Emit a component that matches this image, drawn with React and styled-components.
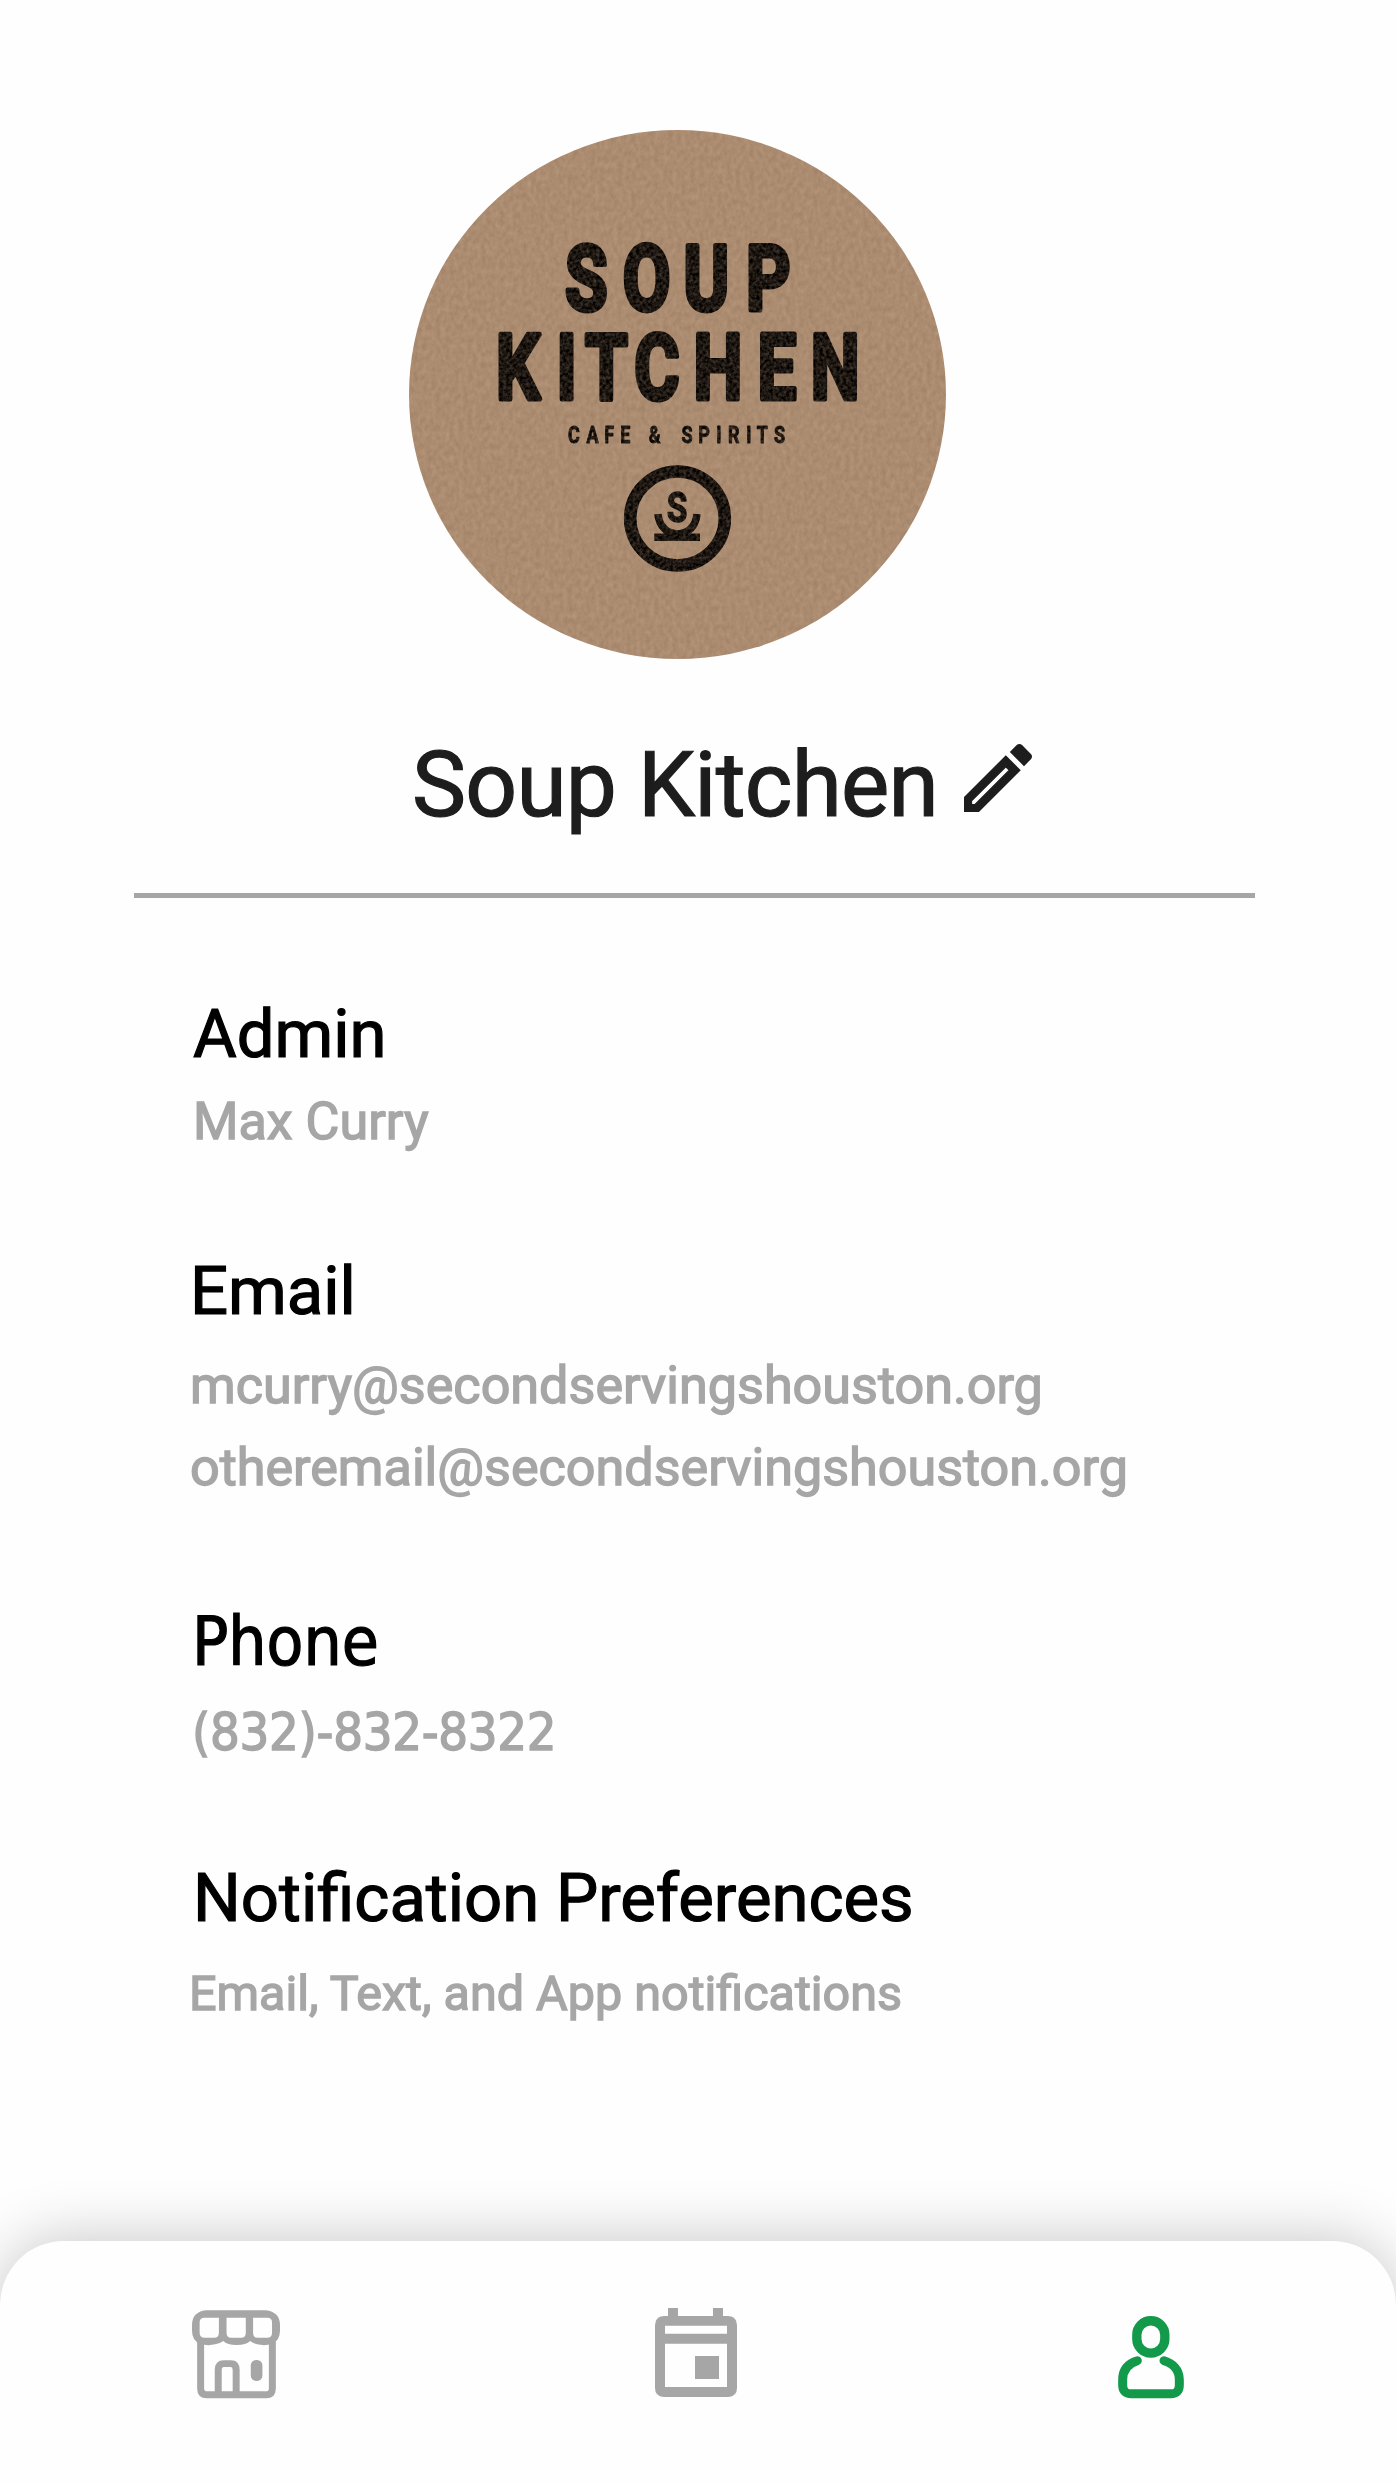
import React, { useState } from "react";
import styled, { createGlobalStyle } from "styled-components";

const GlobalStyle = createGlobalStyle`
	* {
		box-sizing: border-box;
	}
	body {
		margin: 0;
		background-color: #fefefe;
		font-family: Roboto, "Liberation Sans", sans-serif;
	}
`;

const Page = styled.div`
	display: flex;
	flex-direction: column;
	width: 1396px;
	height: 2483px;
	padding-top: 130px;
	overflow: hidden;
	background-color: #fefefe;
`;

const LogoImage = styled.svg`
	display: block;
	flex: none;
	width: 537px;
	height: 529px;
	margin-left: 409px;
`;

const TitleRow = styled.div`
	display: flex;
	align-items: flex-start;
	margin: 73px 0 0 412px;
`;

const Title = styled.h1`
	width: 552px;
	margin: 0;
	color: #1d1d1d;
	font-size: 91px;
	font-weight: 400;
	line-height: 106px;
	letter-spacing: -0.75px;
	white-space: nowrap;
	-webkit-text-stroke: 1.2px #1d1d1d;
`;

const EditButton = styled.button`
	display: flex;
	margin: 12px 0 0;
	padding: 0;
	border: none;
	background: none;
	color: #1d1d1d;
	cursor: pointer;
`;

const Divider = styled.hr`
	flex: none;
	width: 1121px;
	height: 5px;
	margin: 55px 0 0 134px;
	border: none;
	background-color: #a6a6a6;
`;

const Section = styled.section`
	display: flex;
	flex-direction: column;
	margin-top: ${(props) => props.$top}px;
	padding-left: ${(props) => props.$left}px;
	font-family: ${(props) => (props.$alt ? '"DejaVu Sans Condensed", "DejaVu Sans", sans-serif' : "inherit")};
	font-stretch: ${(props) => (props.$alt ? "condensed" : "normal")};
`;

const Heading = styled.h2`
	margin: 0;
	color: #000;
	font-size: 67px;
	font-weight: 400;
	line-height: 80px;
	white-space: nowrap;
	-webkit-text-stroke: 1.2px #000;
`;

const Values = styled.div`
	display: flex;
	flex-direction: column;
	gap: 20px;
	margin-top: ${(props) => props.$gap}px;
	margin-left: ${(props) => props.$shift || 0}px;
`;

const Value = styled.p`
	margin: 0;
	color: #a6a6a6;
	font-size: ${(props) => props.$size || 52.1}px;
	line-height: 62px;
	letter-spacing: ${(props) => props.$spacing || 0}px;
	white-space: nowrap;
	-webkit-text-stroke: 1.4px #a6a6a6;
`;

const NavBar = styled.nav`
	display: flex;
	flex: none;
	align-items: flex-start;
	height: 242px;
	margin-top: auto;
	padding: 67px 0 0 192px;
	border-radius: 64px 64px 0 0;
	background-color: #fefefe;
	box-shadow: 0 -2px 60px rgba(0, 0, 0, 0.22);
`;

const NavButton = styled.button`
	display: flex;
	margin: ${(props) => props.$top}px ${(props) => props.$right || 0}px 0 0;
	padding: 0;
	border: none;
	background: none;
	color: ${(props) => (props.$active ? "#129a4a" : "#a6a6a6")};
	cursor: pointer;
`;

const Logo = () => (
	<LogoImage viewBox="409 130 537 529" role="img" aria-label="Soup Kitchen logo">
		<defs>
			{/* paper grain */}
			<filter id="paper" x="0" y="0" width="100%" height="100%" colorInterpolationFilters="sRGB">
				<feTurbulence type="fractalNoise" baseFrequency="0.22 0.16" numOctaves="3" seed="4" />
				<feColorMatrix values="0.1 0 0 0 0.62  0.1 0 0 0 0.498  0.1 0 0 0 0.388  0 0 0 0 1" />
				<feComposite in2="SourceGraphic" operator="in" />
			</filter>
			{/* worn ink */}
			<filter id="ink" x="-5%" y="-5%" width="110%" height="110%" colorInterpolationFilters="sRGB">
				<feTurbulence type="fractalNoise" baseFrequency="0.3" numOctaves="3" seed="9" />
				<feColorMatrix values="0.45 0 0 0 -0.11  0.38 0 0 0 -0.1  0.32 0 0 0 -0.09  0 0 0 0 1" />
				<feComposite in2="SourceGraphic" operator="in" />
			</filter>
		</defs>
		<ellipse cx="677.5" cy="394.5" rx="268.5" ry="264.5" fill="#ab8b70" filter="url(#paper)" />
		<g
			fill="#17120f"
			stroke="#17120f"
			strokeLinejoin="round"
			fontFamily="Roboto, sans-serif"
			fontWeight="700"
			filter="url(#ink)"
		>
			<g fontSize="91" strokeWidth="5">
				<text transform="translate(565 310) scale(0.76 1)" x="0 76 156 238">
					SOUP
				</text>
				<text transform="translate(496 399) scale(0.76 1)" x="0 79.5 117 182 260 344 414">
					KITCHEN
				</text>
			</g>
			<text
				transform="translate(568 443) scale(0.78 1)"
				fontSize="23"
				strokeWidth="0.9"
				x="0 23.8 46.5 67 103.5 145.6 167 190 205 228.5 242 264"
			>
				CAFE&amp;SPIRITS
			</text>
			<ellipse cx="677.5" cy="518.5" rx="47.3" ry="47" fill="none" strokeWidth="12.6" />
			<path d="M658 514C659 526 667 534 677.5 534S696 526 697 514" fill="none" strokeWidth="7.5" />
			<path d="M654.3 533.5H700V541H654.3Z" stroke="none" />
			<text transform="translate(666.7 522) scale(0.78 1)" fontSize="43" strokeWidth="1.4">
				S
			</text>
		</g>
	</LogoImage>
);

const PencilIcon = () => (
	<svg width="68" height="68" viewBox="3 3 18 18" fill="currentColor">
		<path
			d="M3 17.25V21h3.75L17.81 9.94l-3.75-3.75L3 17.25zM5.92 19H5v-.92l9.06-9.06.92.92L5.92 19z"
			stroke="currentColor"
			strokeWidth="0.3"
		/>
		<path d="M20.71 5.63l-2.34-2.34c-.2-.2-.45-.29-.71-.29s-.51.1-.7.29l-1.83 1.83 3.75 3.75 1.83-1.83c.39-.39.39-1.02 0-1.41z" />
	</svg>
);

const StoreIcon = () => (
	<svg width="88" height="89" viewBox="66 60 265 267" fill="currentColor">
		<path
			fillRule="evenodd"
			d="M108 60H288Q331 65 331 105V122Q331 152 306 162Q285 168 262 163Q250 160 241 153Q230 165 200 165Q172 165 160 153Q150 161 136 163Q113 168 91 162Q66 152 66 122V105Q66 65 108 60ZM103 83Q89 83 89 97V128Q89 143 104 143H133Q147 143 147 128V83ZM170 83V128Q170 143 184 143H214Q228 143 228 128V83ZM250 83V128Q250 143 264 143H292Q307 143 307 128V97Q307 83 293 83Z"
		/>
		<path
			d="M92 155V296Q92 315 111 315H289Q308 315 308 296V155"
			fill="none"
			stroke="currentColor"
			strokeWidth="21"
		/>
		<path
			d="M145 312V240Q145 221 162 221H183Q199 221 199 240V312"
			fill="none"
			stroke="currentColor"
			strokeWidth="21"
		/>
		<rect x="243" y="210" width="35" height="63" rx="16" />
	</svg>
);

const CalendarIcon = () => (
	<svg width="82" height="89" viewBox="60 54 246 267" fill="currentColor">
		<path
			fillRule="evenodd"
			d="M99 54H129V78H234V54H264V78H280Q306 80 306 106V294Q306 319 280 321H86Q60 319 60 294V106Q60 80 86 78H99ZM90 107V131H276V107ZM90 161V291H276V161Z"
		/>
		<path d="M180 198H252V267H180Z" />
	</svg>
);

const PersonIcon = () => (
	<svg width="66" height="82.5" viewBox="54 77 198 247" fill="none" stroke="currentColor" strokeLinecap="round">
		<rect x="110.5" y="91" width="84" height="97" rx="42" strokeWidth="28" />
		<path
			d="M112 211C86 219 68 237 68 268V284Q68 310 94 310H212Q238 310 238 284V268C238 237 218 219 192 211"
			strokeWidth="27"
		/>
	</svg>
);

const App = () => {
	const [tab, setTab] = useState("profile");

	return (
		<Page>
			<GlobalStyle />
			<Logo />
			<TitleRow>
				<Title>Soup Kitchen</Title>
				<EditButton aria-label="Edit name">
					<PencilIcon />
				</EditButton>
			</TitleRow>
			<Divider />

			<Section $top={96} $left={193}>
				<Heading>Admin</Heading>
				<Values $gap={17}>
					<Value>Max Curry</Value>
				</Values>
			</Section>

			<Section $top={98} $left={190}>
				<Heading>Email</Heading>
				<Values $gap={24}>
					<Value>mcurry@secondservingshouston.org</Value>
					<Value>otheremail@secondservingshouston.org</Value>
				</Values>
			</Section>

			<Section $top={103} $left={192} $alt>
				<Heading>Phone</Heading>
				<Values $gap={19}>
					<Value $spacing={-0.3}>(832)-832-8322</Value>
				</Values>
			</Section>

			<Section $top={95} $left={193}>
				<Heading>Notification Preferences</Heading>
				<Values $gap={25} $shift={-4}>
					<Value $size={48.5}>Email, Text, and App notifications</Value>
				</Values>
			</Section>

			<NavBar>
				<NavButton $top={2} $right={375} $active={tab === "store"} aria-label="Store" onClick={() => setTab("store")}>
					<StoreIcon />
				</NavButton>
				<NavButton $top={0} $right={381} $active={tab === "calendar"} aria-label="Calendar" onClick={() => setTab("calendar")}>
					<CalendarIcon />
				</NavButton>
				<NavButton $top={8} $active={tab === "profile"} aria-label="Profile" onClick={() => setTab("profile")}>
					<PersonIcon />
				</NavButton>
			</NavBar>
		</Page>
	);
};

export default App;
